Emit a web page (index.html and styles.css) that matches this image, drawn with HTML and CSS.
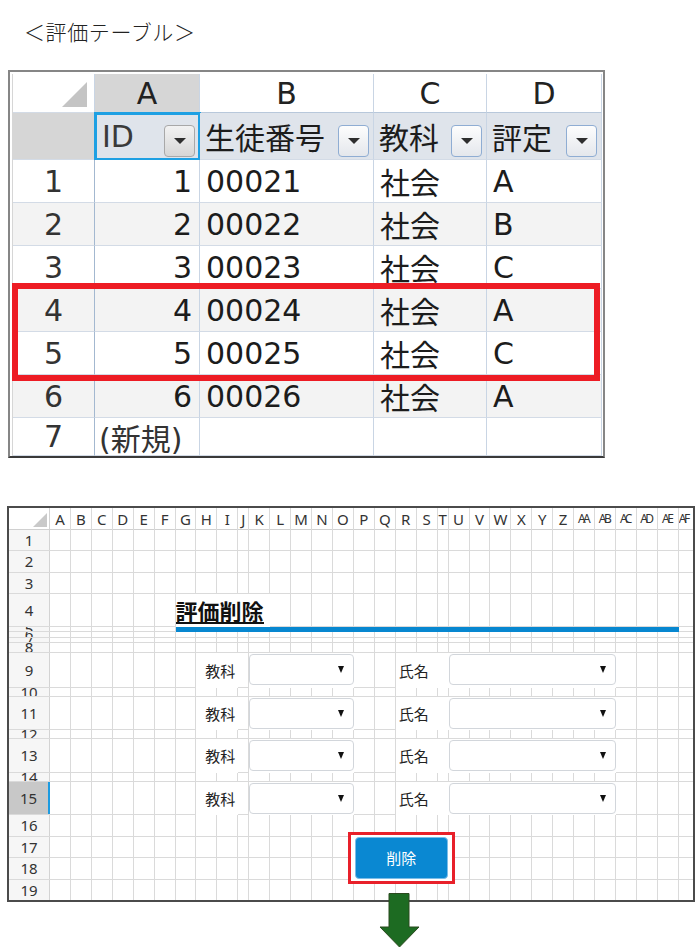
FILE: index.html
```html
<!DOCTYPE html>
<html lang="ja">
<head>
<meta charset="utf-8">
<title>評価テーブル</title>
<link rel="stylesheet" href="styles.css">
</head>
<body>
<div class="page">
  <p class="caption">＜評価テーブル＞</p>

  <div class="tbl">
    <div class="tt">
      <div class="corner"><span class="tri"></span></div>
      <div class="ch sel">A</div>
      <div class="ch">B</div>
      <div class="ch">C</div>
      <div class="ch">D</div>

      <div class="rh fh"></div>
      <div class="f id"><span class="lbl">ID</span><span class="fb gray"></span></div>
      <div class="f"><span>生徒番号</span><span class="fb"></span></div>
      <div class="f"><span>教科</span><span class="fb"></span></div>
      <div class="f"><span>評定</span><span class="fb"></span></div>

      <div class="rh">1</div><div class="n">1</div><div class="t">00021</div><div class="t">社会</div><div class="t">A</div>
      <div class="rh e">2</div><div class="n e">2</div><div class="t e">00022</div><div class="t e">社会</div><div class="t e">B</div>
      <div class="rh">3</div><div class="n">3</div><div class="t">00023</div><div class="t">社会</div><div class="t">C</div>
      <div class="rh e">4</div><div class="n e">4</div><div class="t e">00024</div><div class="t e">社会</div><div class="t e">A</div>
      <div class="rh">5</div><div class="n">5</div><div class="t">00025</div><div class="t">社会</div><div class="t">C</div>
      <div class="rh e">6</div><div class="n e">6</div><div class="t e">00026</div><div class="t e">社会</div><div class="t e">A</div>
      <div class="rh">7</div><div class="t new">(新規)</div><div class="t"></div><div class="t"></div><div class="t"></div>
    </div>
    <div class="hl"></div>
  </div>

  <div class="sheet">
    <div class="g rows">
      <div class="rw hd"><div class="rh2"><span class="tri2"></span></div></div>
      <div class="rw"><div class="rh2">1</div></div>
      <div class="rw"><div class="rh2">2</div></div>
      <div class="rw"><div class="rh2">3</div></div>
      <div class="rw"><div class="rh2">4</div></div>
      <div class="rw sm"><div class="rh2">5</div></div>
      <div class="rw sm"><div class="rh2">6</div></div>
      <div class="rw sm"><div class="rh2">7</div></div>
      <div class="rw sm"><div class="rh2">8</div></div>
      <div class="rw"><div class="rh2">9</div></div>
      <div class="rw sm"><div class="rh2">10</div></div>
      <div class="rw"><div class="rh2">11</div></div>
      <div class="rw sm"><div class="rh2">12</div></div>
      <div class="rw"><div class="rh2">13</div></div>
      <div class="rw sm"><div class="rh2">14</div></div>
      <div class="rw sel"><div class="rh2">15</div></div>
      <div class="rw"><div class="rh2">16</div></div>
      <div class="rw"><div class="rh2">17</div></div>
      <div class="rw"><div class="rh2">18</div></div>
      <div class="rw last"><div class="rh2">19</div></div>
    </div>

    <div class="g cols">
      <div class="cl sp"></div>
      <div class="cl"><b>A</b></div>
      <div class="cl"><b>B</b></div>
      <div class="cl"><b>C</b></div>
      <div class="cl"><b>D</b></div>
      <div class="cl"><b>E</b></div>
      <div class="cl"><b>F</b></div>
      <div class="cl"><b>G</b></div>
      <div class="cl"><b>H</b></div>
      <div class="cl"><b>I</b></div>
      <div class="cl"><b>J</b></div>
      <div class="cl"><b>K</b></div>
      <div class="cl"><b>L</b></div>
      <div class="cl"><b>M</b></div>
      <div class="cl"><b>N</b></div>
      <div class="cl"><b>O</b></div>
      <div class="cl"><b>P</b></div>
      <div class="cl"><b>Q</b></div>
      <div class="cl"><b>R</b></div>
      <div class="cl"><b>S</b></div>
      <div class="cl"><b>T</b></div>
      <div class="cl"><b>U</b></div>
      <div class="cl"><b>V</b></div>
      <div class="cl"><b>W</b></div>
      <div class="cl"><b>X</b></div>
      <div class="cl"><b>Y</b></div>
      <div class="cl"><b>Z</b></div>
      <div class="cl"><b class="x">AA</b></div>
      <div class="cl"><b class="x">AB</b></div>
      <div class="cl"><b class="x">AC</b></div>
      <div class="cl"><b class="x">AD</b></div>
      <div class="cl"><b class="x">AE</b></div>
      <div class="cl lastc"><b class="x xl">AF</b></div>
    </div>

    <div class="g cn">
      <div class="ttl"><span>評価削除</span></div>
      <div class="bar"></div>

      <div class="lab kyo r9">教科</div>
      <div class="ddc d1 r9"><div class="dd"><span class="arr"></span></div></div>
      <div class="lab shi r9">氏名</div>
      <div class="ddc d2 r9"><div class="dd"><span class="arr"></span></div></div>

      <div class="lab kyo r11">教科</div>
      <div class="ddc d1 r11"><div class="dd"><span class="arr"></span></div></div>
      <div class="lab shi r11">氏名</div>
      <div class="ddc d2 r11"><div class="dd"><span class="arr"></span></div></div>

      <div class="lab kyo r13">教科</div>
      <div class="ddc d1 r13"><div class="dd"><span class="arr"></span></div></div>
      <div class="lab shi r13">氏名</div>
      <div class="ddc d2 r13"><div class="dd"><span class="arr"></span></div></div>

      <div class="lab kyo r15">教科</div>
      <div class="ddc d1 r15"><div class="dd"><span class="arr"></span></div></div>
      <div class="lab shi r15">氏名</div>
      <div class="ddc d2 r15"><div class="dd"><span class="arr"></span></div></div>

      <div class="btnbox"><div class="btn">削除</div></div>
    </div>
  </div>

  <svg class="arrow" width="41" height="55" viewBox="0 0 41 55">
    <polygon points="10,0.5 30,0.5 30,34 40,34 20.5,54 1,34 10,34" fill="#1d6b22" stroke="#2b4a1f" stroke-width="1"/>
  </svg>
</div>
</body>
</html>
```

FILE: styles.css
```css
html, body {
  margin: 0;
  padding: 0;
  background: #ffffff;
}
body {
  width: 700px;
  height: 952px;
  overflow: hidden;
  font-family: "Noto Sans", "Noto Sans CJK JP", sans-serif;
  color: #222;
}
.page {
  position: relative;
  width: 700px;
  height: 952px;
}

/* caption */
.caption {
  margin: 0;
  padding: 17px 0 0 24px;
  font: 300 21px/28px "Noto Sans CJK JP", sans-serif;
  letter-spacing: 0.6px;
  color: #222;
}

/* ---------- top table ---------- */
.tbl {
  position: relative;
  margin: 25px 0 0 8px;
  width: 597px;
  box-sizing: border-box;
  border: 2px solid #868686;
  border-bottom-color: #3a3a3a;
  padding: 2px 1px 0 2px;
}
.tt {
  display: grid;
  grid-template-columns: 82px 105px 174px 113px 115px;
  grid-template-rows: 39px 47px repeat(6, 43px) 38px;
  border-left: 1px solid #d6d6d6;
}
.tt > div {
  box-sizing: border-box;
  border-right: 1px solid #c9d5e4;
  border-bottom: 1px solid #d3dbe6;
  display: flex;
  align-items: center;
  font: 30px "DejaVu Sans", "Noto Sans CJK JP", sans-serif;
  color: #1c1c1c;
  white-space: nowrap;
  background: #ffffff;
}
.tt > .corner {
  justify-content: flex-end;
  align-items: flex-end;
  padding: 0 7px 5px 0;
  border-right-color: #c9d5e4;
}
.tri {
  width: 0;
  height: 0;
  border-left: 25px solid transparent;
  border-bottom: 25px solid #c4c4c4;
}
.tt > .ch {
  justify-content: center;
  border-bottom-color: #b8c8db;
  color: #222;
}
.tt > .ch.sel {
  background: #d6d6d6;
}
.tt > .rh {
  justify-content: center;
  border-right-color: #a3b8d0;
  color: #333;
}
.tt > .fh {
  background: #d6d6d6;
}
.tt > .f {
  background: #dfe4eb;
  justify-content: space-between;
  padding: 0 4px 0 5px;
}
.tt > .f.id {
  padding-left: 7px;
  outline: 3px solid #1ea0e3;
  outline-offset: -2px;
}
.f .lbl {
  color: #3a3a3a;
}
.fb {
  width: 31px;
  height: 32px;
  margin-top: 9px;
  box-sizing: border-box;
  border: 1px solid #8fadd3;
  border-radius: 4px;
  background: linear-gradient(#fdfdfd, #e4e7ec);
  display: flex;
  align-items: center;
  justify-content: center;
}
.fb.gray {
  border-color: #a8a8a8;
  background: linear-gradient(#f2f2f2, #d6d6d6);
}
.fb::after {
  content: "";
  width: 0;
  height: 0;
  border-left: 6px solid transparent;
  border-right: 6px solid transparent;
  border-top: 6px solid #2e2e2e;
}
.tt > .e {
  background: #f3f3f3;
}
.tt > .n {
  justify-content: flex-end;
  padding-right: 7px;
}
.tt > .t {
  padding-left: 6px;
}
.tt > .new {
  padding-left: 4px;
  color: #333;
}
.hl {
  position: absolute;
  left: 2px;
  top: 211px;
  width: 588px;
  height: 98px;
  box-sizing: border-box;
  border: 6px solid #ed1c24;
}

/* ---------- bottom sheet ---------- */
.sheet {
  margin: 48px 0 0 7px;
  width: 688px;
  box-sizing: border-box;
  border: 2px solid #4b4b4b;
  display: grid;
  background: #fff;
}
.sheet > .g {
  grid-area: 1 / 1;
}
.g {
  display: grid;
  grid-template-columns: 41px repeat(9, 20.93px) 11px repeat(9, 20.93px) 11px repeat(11, 20.93px) 1fr;
  grid-template-rows: 22px 21.3px 21.3px 21.4px 33px 5px 6px 5px 10px 35px 9px 33px 9px 34px 9px 33px 22px 21px 22px 20px;
}

/* rows layer */
.rw {
  grid-column: 1 / -1;
  display: flex;
  box-sizing: border-box;
  border-bottom: 1px solid #dadada;
  overflow: hidden;
  background: #fff;
}
.rw.last {
  border-bottom: 0;
}
.rh2 {
  flex: none;
  width: 41px;
  box-sizing: border-box;
  background: #f6f6f6;
  border-right: 1px solid #d3d3d3;
  display: flex;
  justify-content: center;
  align-items: center;
  font: 15px/18px "Noto Sans", sans-serif;
  color: #333;
  overflow: hidden;
}
.rw.sm .rh2 {
  line-height: 4px;
}
.rw.hd {
  border-bottom-color: #d0d0d0;
}
.rw.hd .rh2 {
  background: #fff;
  justify-content: flex-end;
  align-items: flex-end;
  padding: 0 2px 2px 0;
}
.tri2 {
  width: 0;
  height: 0;
  border-left: 14px solid transparent;
  border-bottom: 14px solid #c9c9c9;
}
.rw.sel .rh2 {
  background: #c8c8c8;
  border-right: 2px solid #1d9be0;
}

/* columns layer */
.cl {
  grid-row: 1 / -1;
  box-sizing: border-box;
  border-right: 1px solid #dadada;
  min-width: 0;
  overflow: hidden;
}
.cl.sp {
  border: 0;
}
.cl.lastc {
  border: 0;
}
.cl b {
  display: block;
  height: 22px;
  font: normal 15px/22px "Noto Sans", sans-serif;
  text-align: center;
  color: #333;
  white-space: nowrap;
}
.cl b.x {
  font-size: 12px;
  letter-spacing: -2.5px;
  margin-left: -2px;
}
.cl b.xl {
  text-align: left;
  margin-left: 0;
}

/* content layer */
.ttl {
  grid-row: 5;
  grid-column: 8 / 13;
  background: #fff;
  display: flex;
  align-items: flex-end;
  padding-bottom: 3px;
}
.ttl span {
  display: inline-block;
  font: bold 22px/22px "Noto Sans CJK JP", sans-serif;
  color: #111;
  white-space: nowrap;
  padding-bottom: 1px;
  border-bottom: 2px solid #111;
}
.bar {
  grid-row: 6;
  grid-column: 8 / 33;
  background: #0787d0;
}
.r9 { grid-row: 10; }
.r11 { grid-row: 12; }
.r13 { grid-row: 14; }
.r15 { grid-row: 16; }
.lab {
  background: #fff;
  display: flex;
  align-items: center;
  font: 15px "Noto Sans CJK JP", sans-serif;
  color: #222;
  white-space: nowrap;
}
.lab.kyo {
  grid-column: 9 / 11;
  justify-content: flex-end;
  padding-right: 3px;
}
.lab.shi {
  grid-column: 19 / 22;
  padding-left: 3px;
}
.ddc {
  background: #fff;
  display: flex;
  align-items: flex-start;
}
.ddc.d1 { grid-column: 12 / 17; }
.ddc.d2 { grid-column: 22 / 30; }
.dd {
  flex: 1;
  height: 31px;
  margin-top: 1px;
  box-sizing: border-box;
  border: 1px solid #d2d6db;
  border-radius: 4px;
  background: #fff;
  display: flex;
  align-items: center;
  justify-content: flex-end;
  padding-right: 9px;
}
.arr {
  width: 0;
  height: 0;
  border-left: 3.5px solid transparent;
  border-right: 3.5px solid transparent;
  border-top: 7px solid #111;
}
.btnbox {
  grid-row: 18 / 21;
  grid-column: 16 / 23;
  justify-self: center;
  align-self: start;
  margin-top: -5px;
  border: 3px solid #e8202a;
  padding: 2px 4px;
  background: #fff;
}
.btn {
  width: 93px;
  height: 42px;
  box-sizing: border-box;
  background: #0a88d2;
  border: 1px solid #7cbde8;
  border-radius: 4px;
  color: #fff;
  font: 15px "Noto Sans CJK JP", sans-serif;
  display: flex;
  align-items: center;
  justify-content: center;
}

/* arrow overlay */
.arrow {
  position: absolute;
  left: 379px;
  top: 893px;
}
```
